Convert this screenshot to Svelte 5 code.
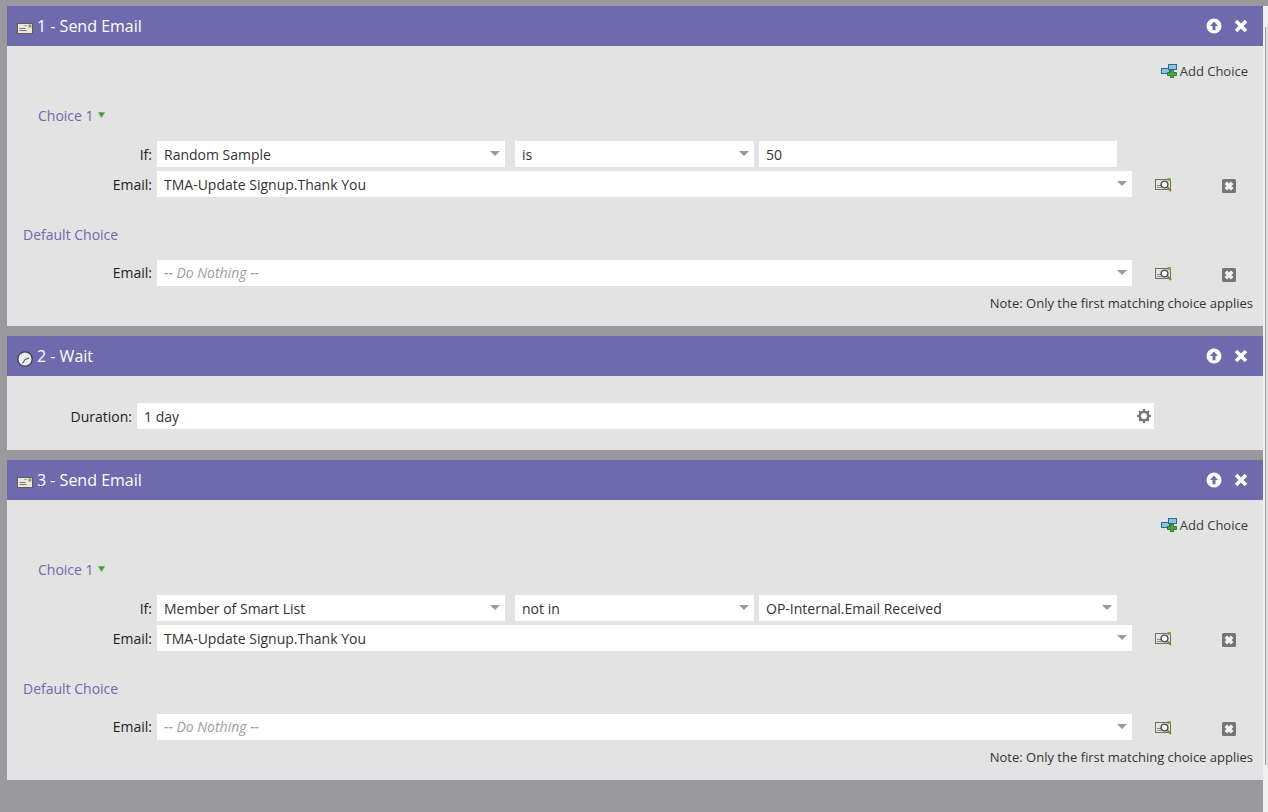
<script>
  const sendEmail = (n, rule) => ({ n, title: 'Send Email', rule });

  const flows = [
    sendEmail(1, { field: 'Random Sample', op: 'is', value: '50', valueSelect: false }),
    { n: 2, title: 'Wait' },
    sendEmail(3, { field: 'Member of Smart List', op: 'not in', value: 'OP-Internal.Email Received', valueSelect: true })
  ];
</script>

{#snippet caret()}
  <svg class="caret" width="10" height="5" viewBox="0 0 10 5"><path d="M0 0h10L5 5z" fill="#9a9a9a" /></svg>
{/snippet}

{#snippet emailRow(value, placeholder, cls)}
  <div class="row email-row {cls}">
    <span class="label">Email:</span>
    <div class="field email" class:placeholder>
      <span>{value}</span>
      {@render caret()}
    </div>
    <svg class="find" width="17" height="14" viewBox="0 0 17 14">
      <rect x="0.500" y="1.500" width="15" height="10" fill="#e6e6de" stroke="#6e6e66" />
      <path d="M2 7.500h4M2 9.500h4" stroke="#8a8a8a" />
      <circle cx="9.500" cy="6.500" r="3.400" fill="#f6fafa" stroke="#3f4c4c" stroke-width="1.400" />
      <rect x="12.500" y="0" width="3.500" height="3" fill="#8f9f4a" />
      <path d="M12.500 9.500l3.500 3.500" stroke="#9a7a2a" stroke-width="2" />
    </svg>
    <svg class="remove" width="14" height="14" viewBox="0 0 14 14">
      <rect width="14" height="14" rx="1.500" fill="#757575" />
      <path d="M3.800 3.800l6.400 6.400M10.200 3.800l-6.400 6.400" stroke="#f4f4f4" stroke-width="3.600" />
    </svg>
  </div>
{/snippet}

<div class="page">
  {#each flows as flow}
    <section class="panel">
      <header>
        {#if flow.rule}
          <svg class="step-icon" width="16" height="12" viewBox="0 0 16 12">
            <rect x="0.500" y="1.500" width="15" height="10" fill="#e8e8de" stroke="#5e5e56" />
            <path d="M2.500 6.500h6M2.500 8.500h7" stroke="#7a7a72" />
            <path d="M7 3.500h3" stroke="#a5a59c" />
            <rect x="11.500" y="2.500" width="3" height="3" fill="#9a9a50" />
          </svg>
        {:else}
          <svg class="step-icon clock" width="16" height="16" viewBox="0 0 16 16">
            <circle cx="8" cy="8" r="7.200" fill="#eceef2" stroke="#3f3f48" stroke-width="1.300" />
            <path d="M8 8.500L12 7M8 8.500L5.500 12.500" stroke="#50505a" stroke-width="1.100" fill="none" />
          </svg>
        {/if}
        <h2>{flow.n} - {flow.title}</h2>
        <div class="actions">
          <svg width="16" height="16" viewBox="0 0 16 16">
            <circle cx="8" cy="8" r="7.500" fill="#fff" />
            <path d="M8 3.500L12 8H9.500v4.200h-3V8H4z" fill="#6f69ae" />
          </svg>
          <svg width="14" height="14" viewBox="0 0 14 14">
            <path d="M2 2l10 10M12 2L2 12" stroke="#fff" stroke-width="3.600" />
          </svg>
        </div>
      </header>

      {#if flow.rule}
        <div class="body choices">
          <div class="add-choice">
            <svg width="16" height="14" viewBox="0 0 16 14">
              <rect x="0.500" y="4.500" width="8" height="5" fill="#8fc0e0" stroke="#2a6a92" />
              <rect x="7.500" y="0.500" width="8" height="5" fill="#8fc0e0" stroke="#2a6a92" />
              <path d="M9.500 6.500h3v2h3v3h-3v2.500h-3v-2.500h-3v-3h3z" fill="#49a83e" stroke="#1d6a1a" stroke-width="0.800" />
            </svg>
            <span>Add Choice</span>
          </div>

          <div class="choice-title">
            <span>Choice 1</span>
            <svg width="7" height="6" viewBox="0 0 7 6"><path d="M0.300 0.300h6.400L3.500 5.800z" fill="#3f9a34" stroke="#7dbb6a" stroke-width="0.600" /></svg>
          </div>

          <div class="row if-row">
            <span class="label">If:</span>
            <div class="field rule-field"><span>{flow.rule.field}</span>{@render caret()}</div>
            <div class="field rule-op"><span>{flow.rule.op}</span>{@render caret()}</div>
            <div class="field rule-value">
              <span>{flow.rule.value}</span>
              {#if flow.rule.valueSelect}{@render caret()}{/if}
            </div>
          </div>
          {@render emailRow('TMA-Update Signup.Thank You', false, 'first')}

          <div class="default-title">Default Choice</div>
          {@render emailRow('-- Do Nothing --', true, 'second')}

          <div class="note">Note: Only the first matching choice applies</div>
        </div>
      {:else}
        <div class="body wait">
          <div class="row">
            <span class="label duration">Duration:</span>
            <div class="field duration-field">
              <span>1 day</span>
              <svg width="14" height="14" viewBox="0 0 14 14">
                <circle cx="7" cy="7" r="4.300" fill="none" stroke="#777" stroke-width="2.600" />
                <path d="M7 0v14M0 7h14M2 2l10 10M12 2L2 12" stroke="#777" stroke-width="2.200" stroke-dasharray="2.400 9.200 2.400" />
              </svg>
            </div>
          </div>
        </div>
      {/if}
    </section>
  {/each}

  <div class="scroll-edge"><div class="thumb"></div></div>
</div>

<style>
  :global(body) {
    margin: 0;
    background: #9a999d;
    font-family: "Open Sans", sans-serif;
    overflow: hidden;
  }

  .page {
    position: relative;
    box-sizing: border-box;
    height: 812px;
    padding: 6px 5px 0 7px;
    display: flex;
    flex-direction: column;
    gap: 10px;
  }

  .scroll-edge {
    position: absolute;
    top: 6px;
    right: 0;
    bottom: 0;
    width: 5px;
    background: #f0f0f0;
  }

  .thumb {
    position: absolute;
    top: 21px;
    right: 0;
    width: 3px;
    height: 738px;
    box-sizing: border-box;
    border-left: 1px solid #a4a4a4;
    background: #dcdcdc;
  }

  header {
    height: 40px;
    background: #6f69ae;
    display: flex;
    align-items: center;
    padding: 0 15px 0 10px;
    color: #fff;
  }

  h2 {
    margin: 0 0 0 4px;
    font-size: 16px;
    font-weight: 400;
    line-height: 40px;
  }

  .step-icon {
    margin-top: 4px;
  }

  .step-icon.clock {
    margin-top: 5px;
  }

  .actions {
    margin-left: auto;
    display: flex;
    align-items: center;
    gap: 12px;
  }

  .body {
    background: #e3e3e3;
    font-size: 14px;
    color: #222;
  }

  .choices {
    height: 280px;
    box-sizing: border-box;
    position: relative;
  }

  .wait {
    height: 74px;
    box-sizing: border-box;
    padding-top: 27px;
  }

  .add-choice {
    display: flex;
    justify-content: flex-end;
    align-items: center;
    gap: 3px;
    height: 20px;
    padding: 15px 15px 0 0;
    font-size: 13px;
    color: #3a3a3a;
  }

  .choice-title {
    display: flex;
    align-items: center;
    gap: 4px;
    margin: 24px 0 0 31px;
    height: 20px;
    color: #6f69ae;
  }

  .default-title {
    margin: 28px 0 0 16px;
    height: 20px;
    line-height: 20px;
    color: #6f69ae;
  }

  .row {
    display: flex;
    align-items: center;
    height: 26px;
  }

  .if-row {
    margin-top: 16px;
  }

  .email-row {
    margin-top: 4px;
  }

  .email-row.second {
    margin-top: 15px;
  }

  .email-row.second .label {
    margin-top: -2px;
  }

  .label {
    width: 146px;
    text-align: right;
    padding-right: 1px;
    box-sizing: border-box;
  }

  .label.duration {
    width: 126px;
  }

  .field {
    height: 26px;
    box-sizing: border-box;
    background: #fff;
    display: flex;
    align-items: center;
    justify-content: space-between;
    padding: 0 5px 0 7px;
    color: #333;
  }

  .caret {
    flex: none;
    margin-top: -2px;
  }

  .rule-field {
    width: 348px;
    margin-left: 4px;
  }

  .rule-op {
    width: 239px;
    margin-left: 10px;
  }

  .rule-value {
    width: 358px;
    margin-left: 5px;
  }

  .email {
    width: 975px;
    margin-left: 4px;
  }

  .placeholder {
    color: #9e9e9e;
    font-style: italic;
  }

  .placeholder span {
    margin-top: -2px;
  }

  .find {
    margin-left: 23px;
    margin-top: 2px;
  }

  .remove {
    margin-left: 50px;
    margin-top: 4px;
  }

  .duration-field {
    width: 1017px;
    margin-left: 4px;
    padding-right: 3px;
  }

  .note {
    position: absolute;
    right: 10px;
    bottom: 14px;
    font-size: 13px;
    line-height: 18px;
    color: #333;
  }
</style>
